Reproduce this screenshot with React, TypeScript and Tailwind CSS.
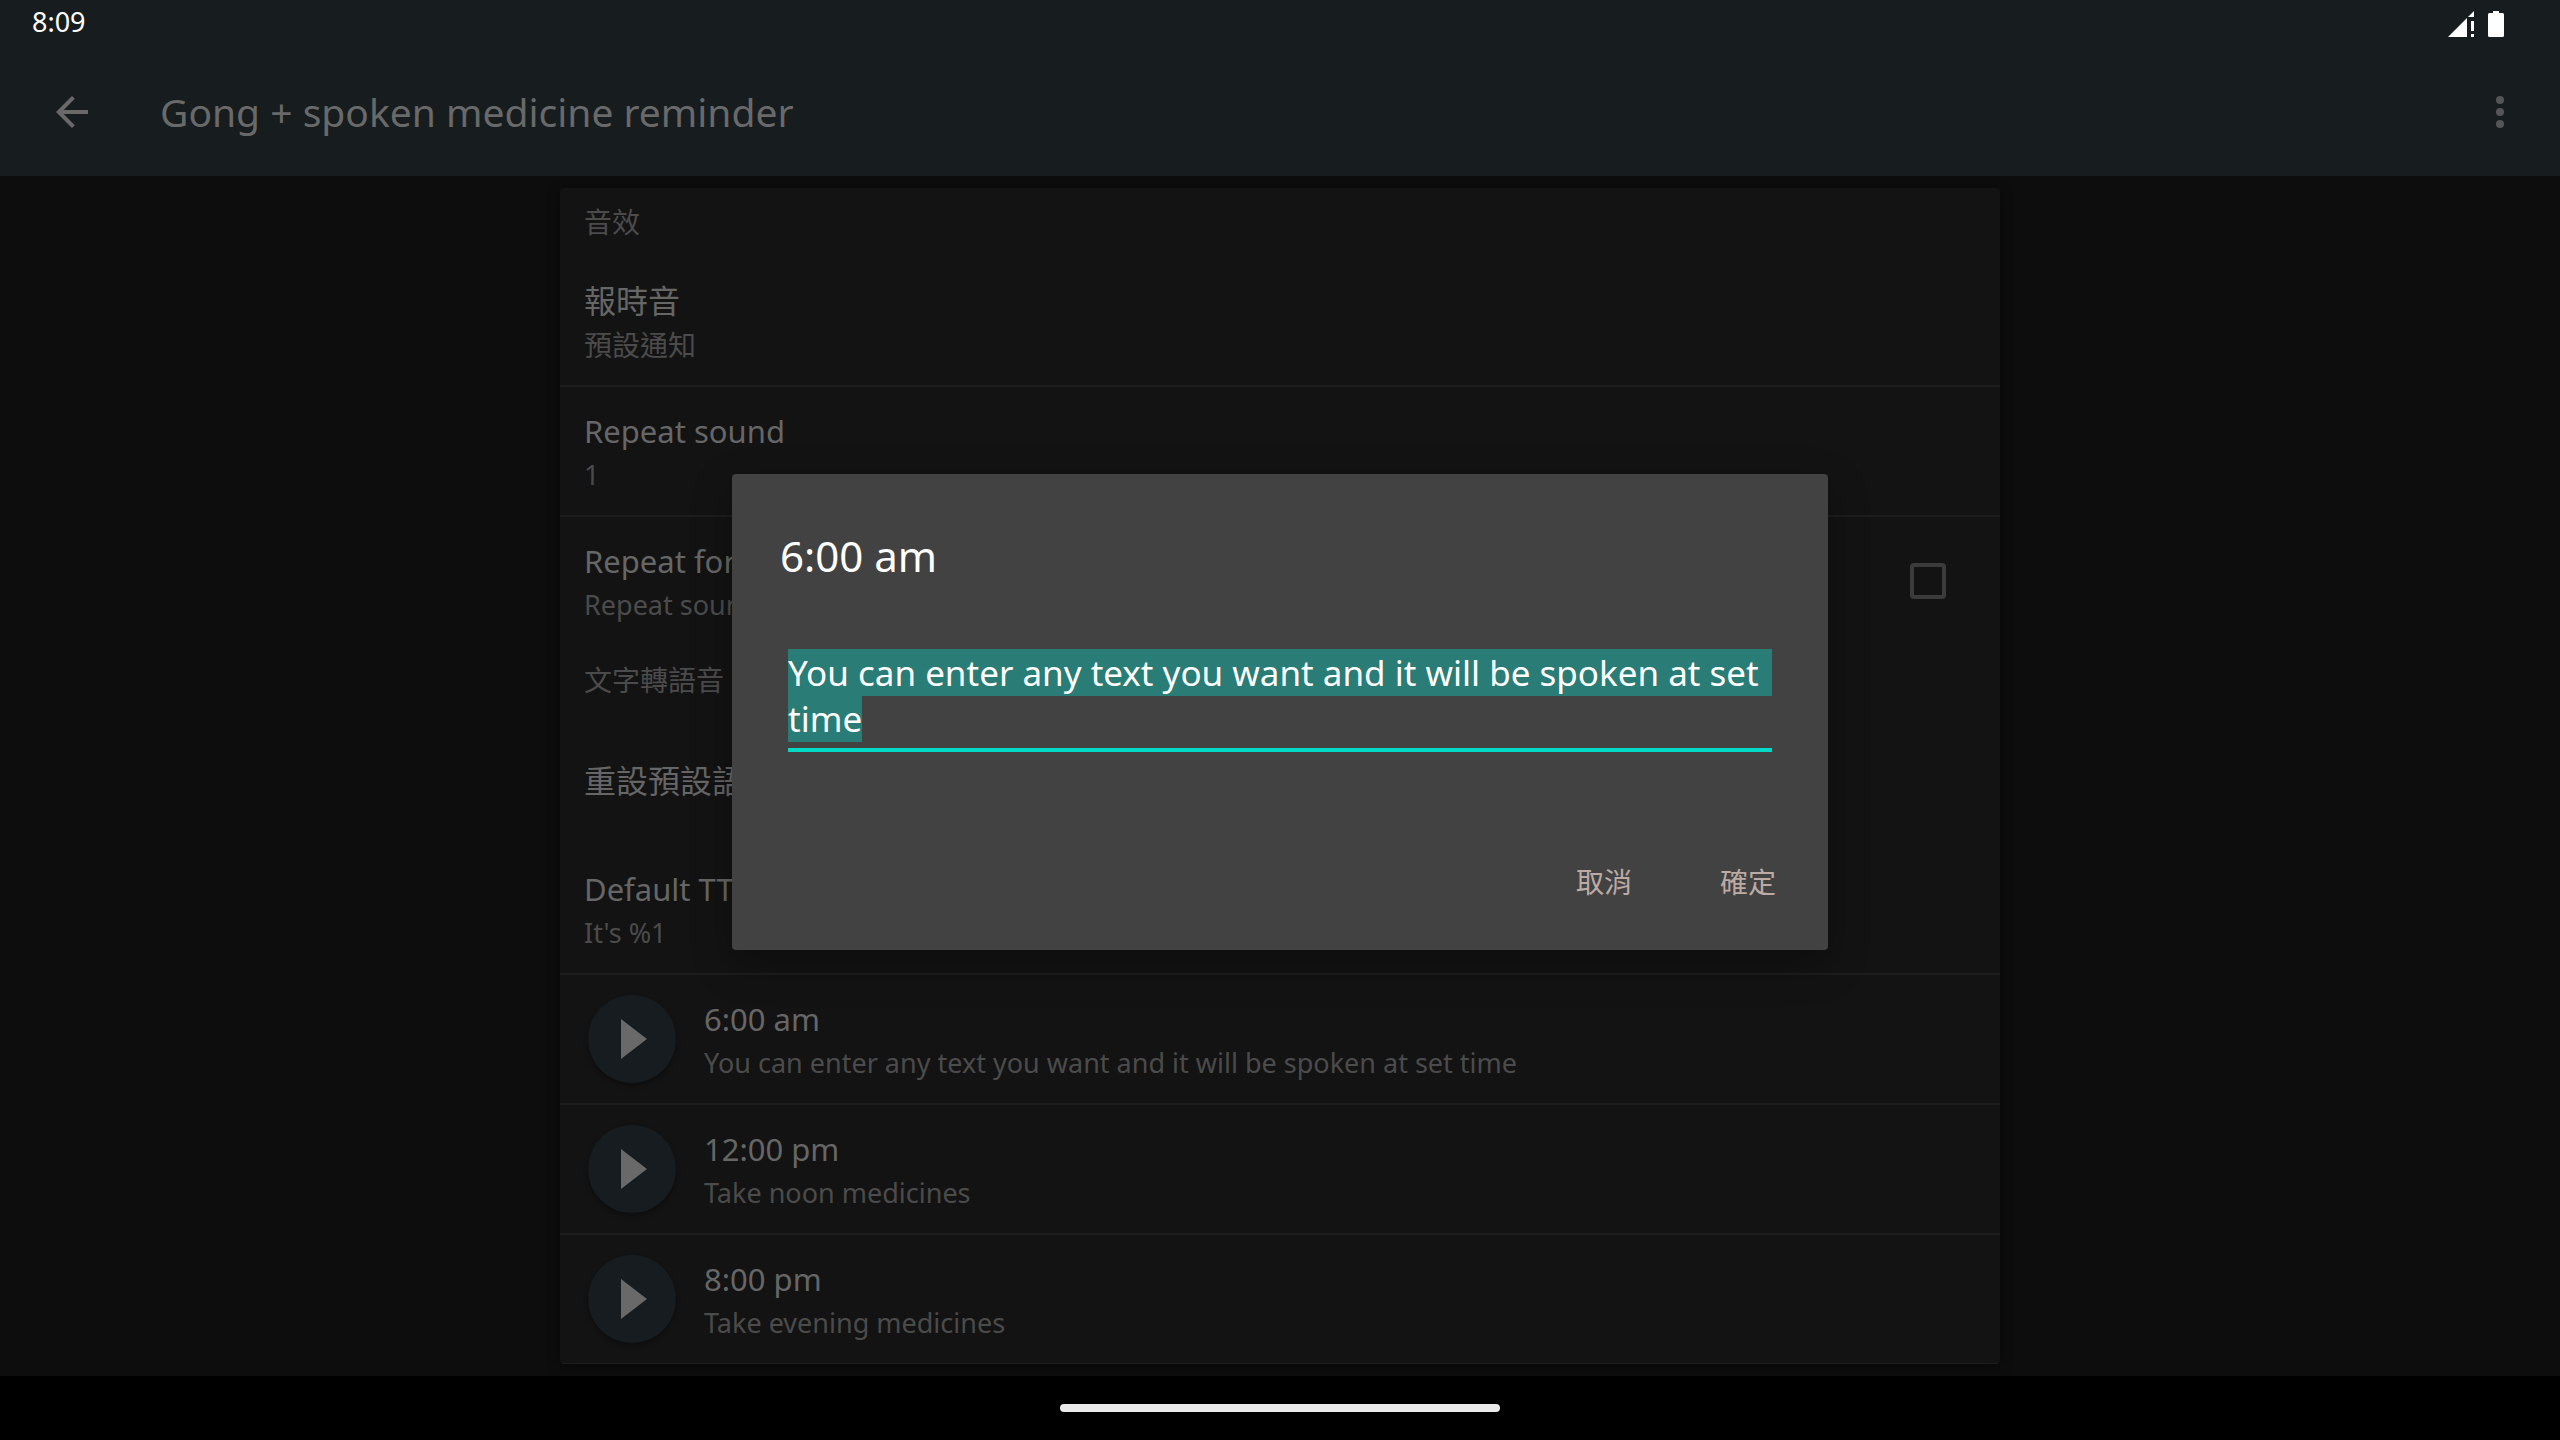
import { useEffect, useRef, useState } from 'react';
import type { ReactNode } from 'react';

const reminders = [
  { time: '6:00 am', text: 'You can enter any text you want and it will be spoken at set time' },
  { time: '12:00 pm', text: 'Take noon medicines' },
  { time: '8:00 pm', text: 'Take evening medicines' },
];

function StatusBar() {
  return (
    <div className="flex h-12 items-center justify-between bg-[#171c1f] pr-14 pl-8">
      <span className="pb-1 text-[27px] leading-[40px] text-white">8:09</span>
      <div className="flex items-center gap-[14px]">
        <svg className="h-[26px] w-[26px]" viewBox="0 0 26 26" fill="#fff" aria-hidden="true">
          <path d="M0 26 19 7v19z" />
          <path d="M20 6 26 0v6z" />
          <path d="M23 10h3v10h-3zM23 23h3v3h-3z" />
        </svg>
        <svg className="h-[26px] w-4" viewBox="0 0 16 26" fill="#fff" aria-hidden="true">
          <path d="M5 0h6v2h3.500a1.500 1.500 0 0 1 1.500 1.500v21a1.500 1.500 0 0 1-1.500 1.500h-13A1.500 1.500 0 0 1 0 24.500v-21A1.500 1.500 0 0 1 1.500 2H5z" />
        </svg>
      </div>
    </div>
  );
}

function AppBar() {
  return (
    <header className="flex h-32 items-center bg-[#171c1f] pr-9 pl-12">
      <button type="button" aria-label="Back">
        <svg className="h-12 w-12" viewBox="0 0 24 24" fill="#696969">
          <path d="M20 11H7.830l5.590-5.590L12 4l-8 8 8 8 1.410-1.410L7.830 13H20v-2z" />
        </svg>
      </button>
      <h1 className="ml-16 flex-1 text-[39px] leading-[56px] text-[#696969]">
        Gong + spoken medicine reminder
      </h1>
      <button type="button" aria-label="More options">
        <svg className="h-12 w-12" viewBox="0 0 48 48" fill="#545556">
          <circle cx="24" cy="12" r="4" />
          <circle cx="24" cy="24" r="4" />
          <circle cx="24" cy="36" r="4" />
        </svg>
      </button>
    </header>
  );
}

function SectionHeader({ children }: { children: ReactNode }) {
  return (
    <h2 className="px-6 pt-[15px] pb-[17px] text-[28px] leading-[36px] text-[#4b4b4b]">
      {children}
    </h2>
  );
}

interface RowProps {
  title: string;
  summary?: string;
  chinese?: boolean;
  divider?: boolean;
  leading?: ReactNode;
  trailing?: ReactNode;
}

function Row({ title, summary, chinese, divider, leading, trailing }: RowProps) {
  return (
    <li
      className={`flex h-[130px] items-center border-b-2 px-6 ${divider ? 'border-[#1d1d1d]' : 'border-transparent'}`}
    >
      {leading}
      <div className="min-w-0 flex-1 pt-1">
        <p className={`leading-[44px] text-[#666] ${chinese ? 'text-[32px]' : 'text-[31px]'}`}>
          {title}
        </p>
        {summary && (
          <p className={`leading-[44px] text-[#4b4b4b] ${chinese ? 'text-[28px]' : 'text-[27px]'}`}>
            {summary}
          </p>
        )}
      </div>
      {trailing}
    </li>
  );
}

function PlayButton({ label }: { label: string }) {
  return (
    <button
      type="button"
      aria-label={label}
      className="mr-7 ml-1 flex h-[88px] w-[88px] items-center justify-center rounded-full bg-[#161c20] shadow-[0_3px_5px_rgba(0,0,0,0.3)]"
    >
      <svg className="h-[88px] w-[88px]" viewBox="0 0 88 88" fill="#696969">
        <path d="M33 24v40l26-20z" />
      </svg>
    </button>
  );
}

function TextDialog({ title, value }: { title: string; value: string }) {
  const [text, setText] = useState(value);
  const field = useRef<HTMLTextAreaElement>(null);

  useEffect(() => {
    field.current?.focus();
    field.current?.select();
  }, []);

  return (
    <div className="absolute inset-x-0 top-12 bottom-16 flex items-center justify-center">
      <div
        role="dialog"
        aria-labelledby="dialog-title"
        className="w-[1096px] max-w-full rounded bg-[#424242] px-12 pt-12 pb-8 shadow-[0_14px_40px_rgba(0,0,0,0.3)]"
      >
        <h2 id="dialog-title" className="text-[42px] leading-[68px] text-white">
          {title}
        </h2>
        <div className="mx-2 mt-14 border-b-4 border-[#03dac5] pb-1">
          <textarea
            ref={field}
            rows={2}
            aria-labelledby="dialog-title"
            value={text}
            onChange={(e) => setText(e.target.value)}
            className="block h-[98px] w-full resize-none overflow-hidden bg-transparent pt-1 text-[35px] leading-[46px] text-white caret-transparent outline-none selection:bg-[#297d76] selection:text-white"
          />
        </div>
        <div className="mt-[94px] flex justify-end gap-8">
          <button type="button" className="h-[72px] w-28 text-[28px] text-[#bcaaa4]">
            取消
          </button>
          <button type="button" className="-mr-6 h-[72px] w-28 text-[28px] text-[#bcaaa4]">
            確定
          </button>
        </div>
      </div>
    </div>
  );
}

export default function App() {
  return (
    <div className="relative flex min-h-screen flex-col bg-[#0d0d0d] font-['Noto_Sans','Noto_Sans_CJK_TC',sans-serif]">
      <StatusBar />
      <AppBar />

      <main className="flex-1 px-4 py-3">
        <div className="mx-auto max-w-[1440px] overflow-hidden rounded bg-[#131313] pt-px shadow-[0_2px_12px_rgba(0,0,0,0.5)]">
          <SectionHeader>音效</SectionHeader>
          <ul>
            <Row title="報時音" summary="預設通知" chinese divider />
            <Row title="Repeat sound" summary="1" divider />
            <Row
              title="Repeat for"
              summary="Repeat sound"
              trailing={
                <input
                  type="checkbox"
                  aria-label="Repeat for"
                  className="mr-[30px] h-9 w-9 appearance-none rounded border-4 border-[#3b3b3b]"
                />
              }
            />
          </ul>
          <SectionHeader>文字轉語音</SectionHeader>
          <ul className="-mb-px">
            <Row title="重設預設語" chinese />
            <Row title="Default TTS" summary="It's %1" divider />
            {reminders.map((r) => (
              <Row
                key={r.time}
                title={r.time}
                summary={r.text}
                divider
                leading={<PlayButton label={`Play ${r.time}`} />}
              />
            ))}
          </ul>
        </div>
      </main>

      {/* gesture navigation */}
      <footer className="flex h-16 items-center justify-center bg-black">
        <div className="h-2 w-[440px] rounded-full bg-[#ebebeb]" />
      </footer>

      <TextDialog title={reminders[0].time} value={reminders[0].text} />
    </div>
  );
}
